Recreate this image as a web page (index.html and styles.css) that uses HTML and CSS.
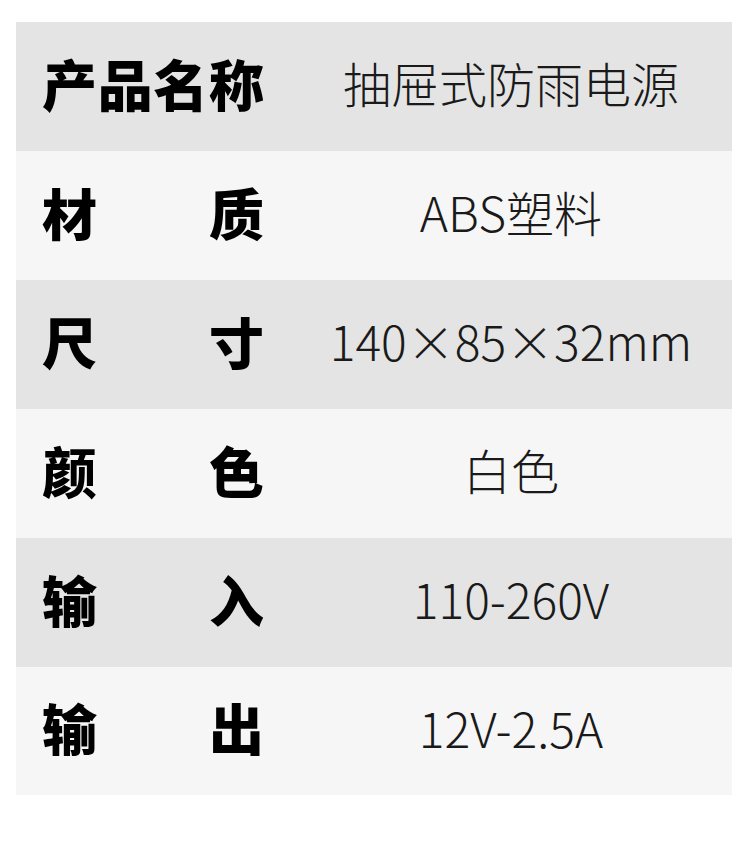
FILE: index.html
```html
<!DOCTYPE html>
<html lang="zh">
<head>
<meta charset="utf-8">
<link rel="stylesheet" href="styles.css">
</head>
<body>
<div class="spec">
  <div class="row dark"><div class="label"><span>产</span><span>品</span><span>名</span><span>称</span></div><div class="value">抽屉式防雨电源</div></div>
  <div class="row light"><div class="label"><span>材</span><span>质</span></div><div class="value">ABS塑料</div></div>
  <div class="row dark"><div class="label"><span>尺</span><span>寸</span></div><div class="value">140×85×32mm</div></div>
  <div class="row light"><div class="label"><span>颜</span><span>色</span></div><div class="value">白色</div></div>
  <div class="row dark"><div class="label"><span>输</span><span>入</span></div><div class="value">110-260V</div></div>
  <div class="row light last"><div class="label"><span>输</span><span>出</span></div><div class="value">12V-2.5A</div></div>
</div>
</body>
</html>
```
FILE: styles.css
```css
html, body {
  margin: 0;
  padding: 0;
  background: #ffffff;
}
body {
  font-family: "Noto Sans CJK SC", "Noto Sans", sans-serif;
  color: #111;
}
.spec {
  margin: 22px 18px 0 16px;
  display: flex;
  flex-direction: column;
}
.row {
  box-sizing: border-box;
  height: 129px;
  padding-bottom: 9px;
  display: grid;
  grid-template-columns: 274px 1fr;
  align-items: center;
}
.row.last { height: 128px; }
.dark { background: #e4e4e4; }
.light { background: #f6f6f6; }
.label {
  margin-left: 26px;
  width: 222px;
  display: flex;
  justify-content: space-between;
  font-size: 55px;
  font-weight: 900;
  color: #000;
  line-height: 1;
}
.value {
  text-align: center;
  font-size: 48px;
  font-weight: 300;
  color: #1a1a1a;
  line-height: 1;
}
```
